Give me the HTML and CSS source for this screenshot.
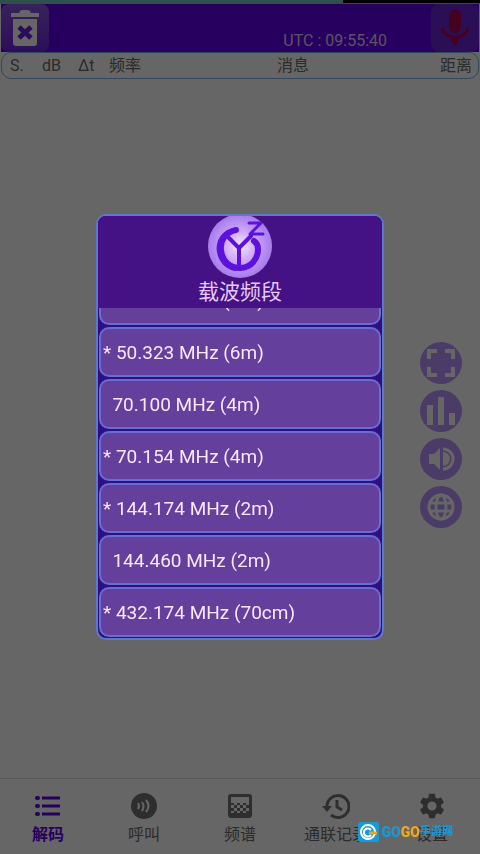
FILE: index.html
```html
<!DOCTYPE html>
<html lang="zh-CN">
<head>
    <meta charset="UTF-8">
    <meta name="viewport" content="width=device-width, initial-scale=1.0">
    <title>载波频段</title>
    <link rel="stylesheet" href="styles.css">
</head>
<body>
    <div class="app">
        <div class="progress"><div class="progress-fill" style="width: 71.5%"></div></div>
        <header class="topbar">
            <button class="top-button" aria-label="清空">
                <svg width="32" height="40" viewBox="0 0 32 40">
                    <path fill="#fff" d="M2 5h8q1-3 3-3h6q2 0 3 3h8v4H2z"/>
                    <path fill="#fff" d="M4 11h24v24q0 3-3 3H7q-3 0-3-3z"/>
                    <path stroke="#6a20e0" stroke-width="5" d="M10 19l12 11M22 19L10 30"/>
                </svg>
            </button>
            <span class="clock">UTC : 09:55:40</span>
            <button class="top-button mic" aria-label="录音">
                <svg width="32" height="40" viewBox="0 0 32 40">
                    <rect x="10" y="1" width="12" height="24" rx="6" fill="#b00050"/>
                    <path fill="none" stroke="#b00050" stroke-width="3" d="M3 20c2 6 7 9 13 9s11-3 13-9M16 29v9"/>
                    <path fill="#b00050" d="M11 30h10l-5 8z"/>
                </svg>
            </button>
        </header>
        <div class="columns">
            <span class="col-s">S.</span>
            <span class="col-db">dB</span>
            <span class="col-dt">Δt</span>
            <span class="col-freq">频率</span>
            <span class="col-msg">消息</span>
            <span class="col-dist">距离</span>
        </div>
        <main class="messages">
            <div class="tools">
                <button class="tool" aria-label="全屏">
                    <svg width="42" height="42" viewBox="0 0 42 42"><path fill="none" stroke="#fff" stroke-width="4" d="M9 17V9h8M25 9h8v8M33 25v8h-8M17 33H9v-8"/></svg>
                </button>
                <button class="tool" aria-label="图表">
                    <svg width="42" height="42" viewBox="0 0 42 42"><path fill="#fff" d="M7 15h6v20H7zM18 7h6v28h-6zM29 23h6v12h-6z"/></svg>
                </button>
                <button class="tool" aria-label="音量">
                    <svg width="42" height="42" viewBox="0 0 42 42"><path fill="#fff" d="M9 16h5l6-6v22l-6-6H9z"/><path fill="#fff" d="M23 14a7 7 0 0 1 0 14z"/><path fill="none" stroke="#fff" stroke-width="3" d="M23 11a10 10 0 0 1 0 20"/></svg>
                </button>
                <button class="tool" aria-label="网络">
                    <svg width="42" height="42" viewBox="0 0 42 42"><g fill="none" stroke="#fff" stroke-width="3"><circle cx="21" cy="21" r="12"/><ellipse cx="21" cy="21" rx="5" ry="12"/><path d="M10 17h22M10 25h22"/></g></svg>
                </button>
            </div>
        </main>
        <nav class="tabs">
            <a class="tab active" href="#decode">
                <svg width="28" height="28" viewBox="0 0 28 28"><g stroke="#6200ee" stroke-width="3" stroke-linecap="round"><path d="M8 6h18M8 14h18M8 22h18" stroke-linecap="butt"/><path stroke-width="4" d="M3 6h1M3 14h1M3 22h1"/></g></svg>
                <span>解码</span>
            </a>
            <a class="tab" href="#call">
                <svg width="28" height="28" viewBox="0 0 28 28"><circle cx="14" cy="14" r="13" fill="#747474"/><path fill="none" stroke="#fff" stroke-width="2" d="M8 11q2 3 0 6M12 10q3 4 0 9M16 8q5 6 0 12"/></svg>
                <span>呼叫</span>
            </a>
            <a class="tab" href="#spectrum">
                <svg width="28" height="28" viewBox="0 0 28 28">
                    <rect x="2" y="2" width="24" height="24" rx="3" fill="#747474"/>
                    <path fill="#fff" d="M5 5h18v6H5z"/>
                    <path fill="#fff" d="M8 10h3v3H8zM14 10h3v3h-3zM20 10h3v3h-3zM5 13h3v3H5zM11 13h3v3h-3zM17 13h3v3h-3zM8 16h3v3H8zM14 16h3v3h-3zM20 16h3v3h-3zM5 19h3v2H5zM11 19h3v2h-3zM17 19h3v2h-3z"/>
                </svg>
                <span>频谱</span>
            </a>
            <a class="tab" href="#log">
                <svg width="28" height="28" viewBox="0 0 28 28"><path fill="none" stroke="#747474" stroke-width="3" d="M5 15A11 11 0 1 1 9 23M15 8v7l5 3"/><path fill="#747474" d="M0 14h10l-5 6z"/></svg>
                <span>通联记录</span>
            </a>
            <a class="tab" href="#settings">
                <svg width="28" height="28" viewBox="1 1 22 22"><path fill="#747474" d="M19.14 12.94a7 7 0 0 0 0-1.88l2.03-1.58a.5.5 0 0 0 .12-.61l-1.92-3.32a.5.5 0 0 0-.59-.22l-2.39.96a7 7 0 0 0-1.62-.94l-.36-2.54a.5.5 0 0 0-.48-.41h-3.84a.5.5 0 0 0-.47.41l-.36 2.54a7 7 0 0 0-1.62.94l-2.39-.96a.5.5 0 0 0-.59.22L2.74 8.87a.5.5 0 0 0 .12.61l2.03 1.58a7 7 0 0 0 0 1.88l-2.03 1.58a.5.5 0 0 0-.12.61l1.92 3.32c.12.22.37.29.59.22l2.39-.96c.5.38 1.03.7 1.62.94l.36 2.54c.05.24.24.41.48.41h3.84c.24 0 .44-.17.47-.41l.36-2.54a7 7 0 0 0 1.62-.94l2.39.96c.22.08.47 0 .59-.22l1.92-3.32a.5.5 0 0 0-.12-.61zM12 15.6a3.6 3.6 0 1 1 0-7.2 3.6 3.6 0 0 1 0 7.2z"/></svg>
                <span>设置</span>
            </a>
        </nav>
    </div>

    <div class="overlay">
        <div class="dialog" role="dialog" aria-labelledby="bandTitle">
            <div class="dialog-head">
                <svg class="logo" width="64" height="64" viewBox="0 0 64 64">
                    <defs>
                        <radialGradient id="glow">
                            <stop offset="0" stop-color="#f4e6ff"/>
                            <stop offset="0.55" stop-color="#c8a0fb"/>
                            <stop offset="1" stop-color="#a77bea"/>
                        </radialGradient>
                    </defs>
                    <circle cx="32" cy="32" r="32" fill="url(#glow)"/>
                    <g fill="none" stroke="#5c12dc" stroke-linecap="round">
                        <path stroke-width="6" d="M28 16C17 18 12 27 13 36c1 11 9 18 19 18 11 0 18-9 18-19 0-3-1-6-4-8"/>
                        <path stroke-width="4" d="M20 18C10 24 8 36 14 46c3 5 8 8 13 9"/>
                        <path stroke-width="4" d="M19 22l12 12v21M31 34l12-12"/>
                        <path stroke-width="3" stroke-linejoin="round" d="M41 9l12 0-11 11h13"/>
                    </g>
                </svg>
                <h1 id="bandTitle">载波频段</h1>
            </div>
            <div class="bands">
                <button class="band">* 50.313 MHz (6m)</button>
                <button class="band">* 50.323 MHz (6m)</button>
                <button class="band">&nbsp; 70.100 MHz (4m)</button>
                <button class="band">* 70.154 MHz (4m)</button>
                <button class="band">* 144.174 MHz (2m)</button>
                <button class="band">&nbsp; 144.460 MHz (2m)</button>
                <button class="band">* 432.174 MHz (70cm)</button>
            </div>
        </div>
    </div>

    <div class="watermark">
        <svg width="21" height="20" viewBox="0 0 21 20">
            <rect width="21" height="20" rx="3" fill="#159bdc"/>
            <circle cx="10" cy="10" r="7" fill="none" stroke="#fff" stroke-width="2"/>
            <path fill="none" stroke="#fff" stroke-width="2" d="M13 8a4 4 0 1 0 0 5"/>
            <path fill="none" stroke="#f5a51c" stroke-width="3" d="M11 11h8"/>
        </svg>
        <span class="go">GO</span><span class="go orange">GO</span><span class="site">手游网</span>
    </div>
</body>
</html>
```
FILE: styles.css
```css
* {
    box-sizing: border-box;
}
body {
    margin: 0;
    background-color: #fff;
    font-family: Roboto, "Noto Sans CJK SC", sans-serif;
}
button {
    border: none;
    padding: 0;
    font-family: inherit;
}
svg {
    display: block;
}
.app {
    display: flex;
    flex-direction: column;
    height: 100vh;
}
.progress {
    height: 4px;
    background-color: #000;
    border-bottom: 1px solid #b0a0d0;
}
.progress-fill {
    height: 3px;
    background-color: #78c8c4;
}
.topbar {
    display: flex;
    align-items: flex-end;
    height: 48px;
    margin: 0 1px;
    background-color: #6200ee;
}
.top-button {
    display: flex;
    justify-content: center;
    align-items: center;
    width: 48px;
    height: 48px;
    border-radius: 8px;
    background: linear-gradient(#8a58e0, #6c24e0);
}
.mic {
    background: #6a24d8;
}
.clock {
    margin-left: auto;
    margin-right: 44px;
    font-size: 16px;
    line-height: 22px;
    color: #e0ccfa;
}
.columns {
    display: flex;
    align-items: center;
    height: 27px;
    margin: 0 1px;
    padding: 0 6px 0 8px;
    border: 1px solid #78b4e8;
    border-radius: 10px;
    font-size: 16px;
    line-height: 24px;
    color: #6c6c6c;
}
.col-s {
    width: 32px;
}
.col-db {
    width: 36px;
}
.col-dt {
    width: 31px;
}
.col-freq {
    width: 168px;
}
.col-dist {
    margin-left: auto;
}
.messages {
    flex: 1;
    display: flex;
    justify-content: flex-end;
    align-items: center;
    padding: 12px 18px 0 0;
}
.tools {
    display: flex;
    flex-direction: column;
    gap: 6px;
}
.tool {
    width: 42px;
    height: 42px;
    border-radius: 50%;
    background-color: #b896ff;
}
.tabs {
    display: flex;
    height: 76px;
    border-top: 1px solid #dcdcdc;
}
.tab {
    flex: 1;
    display: flex;
    flex-direction: column;
    align-items: center;
    padding-top: 13px;
    font-size: 16px;
    line-height: 30px;
    color: #6c6c6c;
    text-decoration: none;
    white-space: nowrap;
}
.active {
    color: #6200ee;
    font-weight: bold;
}
.overlay {
    position: fixed;
    inset: 0;
    display: flex;
    justify-content: center;
    align-items: center;
    background-color: rgba(0, 0, 0, 0.6);
}
.dialog {
    width: 60%;
    border: 2px solid #5c78cc;
    border-radius: 10px;
    background-color: #2c1082;
    overflow: hidden;
}
.dialog-head {
    display: flex;
    flex-direction: column;
    align-items: center;
    height: 92px;
    background-color: #451285;
}
.logo {
    flex: none;
    margin-top: -2px;
}
.dialog-head h1 {
    margin: 0;
    font-size: 21px;
    font-weight: normal;
    line-height: 28px;
    color: #e6c8fa;
}
/* list is scrolled to the end, first row is cut by the header */
.bands {
    display: flex;
    flex-direction: column;
    justify-content: flex-end;
    gap: 2px;
    height: 330px;
    padding: 0 1px 1px;
    overflow: hidden;
}
.band {
    flex: none;
    height: 50px;
    padding: 0 2px;
    border: 2px solid #6a6cd2;
    border-radius: 10px;
    background-color: #64409c;
    font-size: 19px;
    text-align: left;
    color: #fae6ff;
}
.watermark {
    position: fixed;
    right: 27px;
    bottom: 12px;
    display: flex;
    align-items: center;
    font-weight: 900;
    line-height: 20px;
}
.watermark svg {
    margin-right: 3px;
}
.go {
    font-size: 14px;
    color: #189ada;
}
.orange {
    color: #f5a51c;
}
.site {
    font-size: 11px;
    color: #189ada;
}
```
